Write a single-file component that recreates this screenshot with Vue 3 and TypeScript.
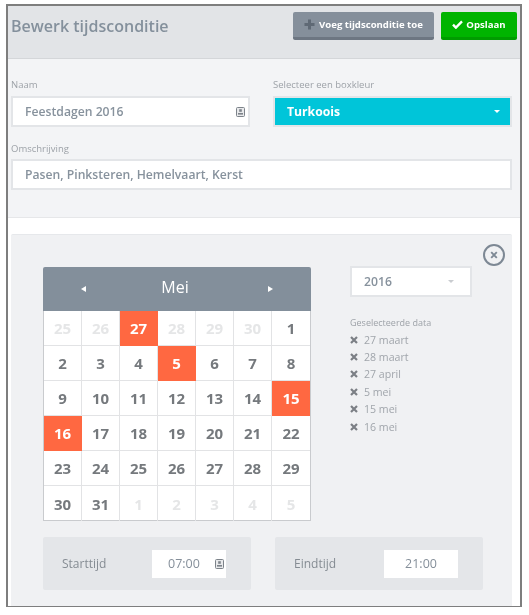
<script setup lang="ts">
interface Day { n: number; muted: boolean; on: boolean }
const muted1 = [25, 26, 27, 28, 29, 30]
const days: Day[] = []
muted1.forEach((n) => days.push({ n, muted: n !== 27, on: n === 27 }))
for (let n = 1; n <= 31; n++) days.push({ n, muted: false, on: [5, 15, 16].includes(n) })
for (let n = 1; n <= 5; n++) days.push({ n, muted: true, on: false })
const selected = ['27 maart', '28 maart', '27 april', '5 mei', '15 mei', '16 mei']
</script>

<template>
  <div class="frame">
    <header class="top">
      <h1>Bewerk tijdsconditie</h1>
      <div class="actions">
        <button class="btn grey">
          <svg width="11" height="11" viewBox="0 0 11 11"><path d="M4 0.5h3v3.5h3.5v3H7v3.5H4V7H0.5V4H4z" fill="#5f6975"/></svg>
          Voeg tijdsconditie toe
        </button>
        <button class="btn green">
          <svg width="11" height="9" viewBox="0 0 12 10"><path d="M1 5.2l3.2 3.3L11 1.6" fill="none" stroke="#fff" stroke-width="2.6"/></svg>
          Opslaan
        </button>
      </div>
    </header>

    <section class="form">
      <div class="two">
        <div class="field">
          <label>Naam</label>
          <div class="input">
            <span>Feestdagen 2016</span>
            <svg class="key" width="9" height="10" viewBox="0 0 9 10"><rect x=".5" y=".5" width="8" height="9" rx="1" fill="#e8e9eb" stroke="#7d838a"/><rect x="3.2" y="2.2" width="2.6" height="2.6" fill="#7d838a"/><rect x="2" y="6" width="5" height="1.6" fill="#7d838a"/></svg>
          </div>
        </div>
        <div class="field">
          <label>Selecteer een boxkleur</label>
          <div class="input colour">
            <span>Turkoois</span>
            <i class="caret white"></i>
          </div>
        </div>
      </div>
      <div class="field wide">
        <label>Omschrijving</label>
        <div class="input"><span>Pasen, Pinksteren, Hemelvaart, Kerst</span></div>
      </div>
    </section>

    <section class="band">
      <div class="panel">
        <button class="close" aria-label="Sluiten">
          <svg width="8" height="8" viewBox="0 0 8 8"><path d="M1.2 1.2l5.6 5.6M6.8 1.2L1.2 6.8" stroke="#7d8894" stroke-width="1.9"/></svg>
        </button>
        <div class="main">
          <div class="calendar">
            <div class="month">
              <i class="tri left"></i>
              <span>Mei</span>
              <i class="tri right"></i>
            </div>
            <div class="grid">
              <div v-for="(d, i) in days" :key="i" class="cell" :class="{ muted: d.muted, on: d.on }">{{ d.n }}</div>
            </div>
          </div>
          <aside class="side">
            <div class="input year">
              <span>2016</span>
              <i class="caret pale"></i>
            </div>
            <h2>Geselecteerde data</h2>
            <ul>
              <li v-for="s in selected" :key="s">
                <svg width="8" height="8" viewBox="0 0 8 8"><path d="M1 1l6 6M7 1L1 7" stroke="#7b7f85" stroke-width="2.2"/></svg>
                {{ s }}
              </li>
            </ul>
          </aside>
        </div>
        <div class="times">
          <div class="time">
            <span>Starttijd</span>
            <div class="clock with-key">
              07:00
              <svg class="key" width="9" height="10" viewBox="0 0 9 10"><rect x=".5" y=".5" width="8" height="9" rx="1" fill="#e8e9eb" stroke="#7d838a"/><rect x="3.2" y="2.2" width="2.6" height="2.6" fill="#7d838a"/><rect x="2" y="6" width="5" height="1.6" fill="#7d838a"/></svg>
            </div>
          </div>
          <div class="time">
            <span>Eindtijd</span>
            <div class="clock">21:00</div>
          </div>
        </div>
      </div>
    </section>
  </div>
</template>

<style>
html, body { background: #fff; }
</style>

<style scoped>
.frame {
  box-sizing: border-box;
  width: 516px;
  height: 603px;
  margin: 4px 0 0 6px;
  border: 2px solid #7e7e7e;
  border-bottom-width: 1px;
  font-family: "Open Sans", "Liberation Sans", sans-serif;
  overflow: hidden;
  display: flex;
  flex-direction: column;
  background: #fff;
  filter: blur(0.35px);
}
.top {
  box-sizing: border-box;
  height: 53px;
  flex: none;
  background: #e2e4e7;
  border-bottom: 1px solid #d4d6d9;
  display: flex;
  justify-content: space-between;
  padding: 6px 3px 0 3px;
}
h1 {
  margin: 3px 0 0;
  font-size: 16px;
  line-height: 22px;
  font-weight: 600;
  color: #84909c;
}
.actions { display: flex; gap: 7px; }
.btn {
  box-sizing: border-box;
  height: 28px;
  border: 0;
  border-radius: 2px;
  color: #fff;
  font: 700 9.6px/1 "Open Sans", sans-serif;
  display: flex;
  align-items: center;
  justify-content: center;
  gap: 3px;
  padding: 0;
}
.grey { width: 141px; background: #858f9b; border-bottom: 3px solid #6d7682; gap: 4px; }
.green { width: 76px; background: #00b400; border-bottom: 3px solid #009c00; }
.form {
  box-sizing: border-box;
  height: 159px;
  flex: none;
  background: #f3f4f6;
  border-bottom: 1px solid #e6e7e9;
  padding: 19px 8px 0 3px;
}
.two { display: flex; gap: 24px; }
.two .field { width: 239px; }
.two .field:last-child { width: 238px; margin-left: -1px; flex: none; width: 239px; }
.field label {
  display: block;
  font-size: 9.5px;
  line-height: 13px;
  color: #9da2a8;
  margin-bottom: 5px;
}
.wide { margin-top: 15px; }
.wide label { margin-bottom: 4px; }
.input {
  box-sizing: border-box;
  height: 31px;
  background: #fff;
  border: 2px solid #e3e5e8;
  display: flex;
  align-items: center;
  justify-content: space-between;
  padding: 0 3px 0 12px;
  font-size: 12.2px;
  font-weight: 600;
  color: #87929d;
}
.colour {
  background: #00c5d9;
  color: #fff;
  font-weight: 700;
  padding: 0 10px 0 12px;
}
.caret { width: 0; height: 0; border: 3px solid transparent; border-bottom: 0; border-top-width: 3px; }
.caret.white { border-top-color: #fff; }
.caret.pale { border-top-color: #c9ccd0; }
.band {
  flex: 1;
  background: #fff;
  padding: 16px 8px 0 3px;
  display: flex;
}
.panel {
  position: relative;
  flex: 1;
  box-sizing: border-box;
  background: #f0f1f3;
  border-radius: 2px 2px 0 0;
  border-top: 1px solid #e6e8eb;
  padding: 32px 29px 0 32px;
}
.close {
  position: absolute;
  top: 9px;
  right: 7px;
  box-sizing: border-box;
  width: 22px;
  height: 22px;
  border: 2px solid #7d8894;
  border-radius: 50%;
  background: transparent;
  padding: 0;
  display: flex;
  align-items: center;
  justify-content: center;
}
.main { display: flex; align-items: flex-start; gap: 39px; }
.calendar { width: 268px; flex: none; }
.month {
  box-sizing: border-box;
  height: 44px;
  background: #838f9b;
  border-radius: 2px 2px 0 0;
  color: #fff;
  font-size: 16px;
  display: flex;
  align-items: center;
  justify-content: space-between;
  padding: 0 38px;
}
.month span { margin: -4px 4px 0 0; }
.tri { width: 0; height: 0; border-style: solid; border-color: transparent; border-width: 3.5px 0; }
.tri.left { border-right: 5px solid #fff; }
.tri.right { border-left: 5px solid #fff; }
.grid {
  display: grid;
  grid-template-columns: repeat(7, 38fr);
  grid-auto-rows: 35px;
  background: #fff;
  border-left: 1px solid #c9cbce;
  border-right: 1px solid #c9cbce;
  border-bottom: 1px solid #c9cbce;
  box-sizing: border-box;
  height: 210px;
}
.cell {
  box-sizing: border-box;
  border-right: 1px solid #e2e3e5;
  border-bottom: 1px solid #e2e3e5;
  display: flex;
  align-items: center;
  justify-content: center;
  font-size: 15px;
  font-weight: 700;
  color: #75797d;
}
.cell:nth-child(7n) { border-right: 0; }
.cell:nth-last-child(-n + 7) { border-bottom: 0; }
.cell.muted { color: #e5e6e7; }
.cell.on { background: #ff6841; color: #fff; border-color: #ff6841; }
.side { width: 122px; flex: none; }
.year {
  padding: 0 16px 0 12px;
  margin-top: -1px;
}
h2 {
  margin: 20px 0 0;
  font-size: 9px;
  line-height: 12px;
  font-weight: 400;
  color: #9da2a8;
}
ul { list-style: none; margin: 2px 0 0; padding: 0; }
li {
  height: 17.4px;
  display: flex;
  align-items: center;
  gap: 6px;
  font-size: 10.6px;
  color: #a0a5ab;
}
.times { display: flex; gap: 24px; margin-top: 16px; }
.time {
  box-sizing: border-box;
  width: 208px;
  height: 53px;
  background: #e4e6e9;
  border-radius: 2px;
  display: flex;
  align-items: center;
  justify-content: space-between;
  padding: 0 25px 0 19px;
  font-size: 12px;
  color: #858c93;
}
.clock {
  box-sizing: border-box;
  width: 74px;
  height: 28px;
  background: #fff;
  display: flex;
  align-items: center;
  justify-content: center;
  font-size: 12.5px;
  font-weight: 400;
  color: #858f9a;
}
.clock.with-key {
  justify-content: space-between;
  padding: 0 2px 0 16px;
}
</style>
